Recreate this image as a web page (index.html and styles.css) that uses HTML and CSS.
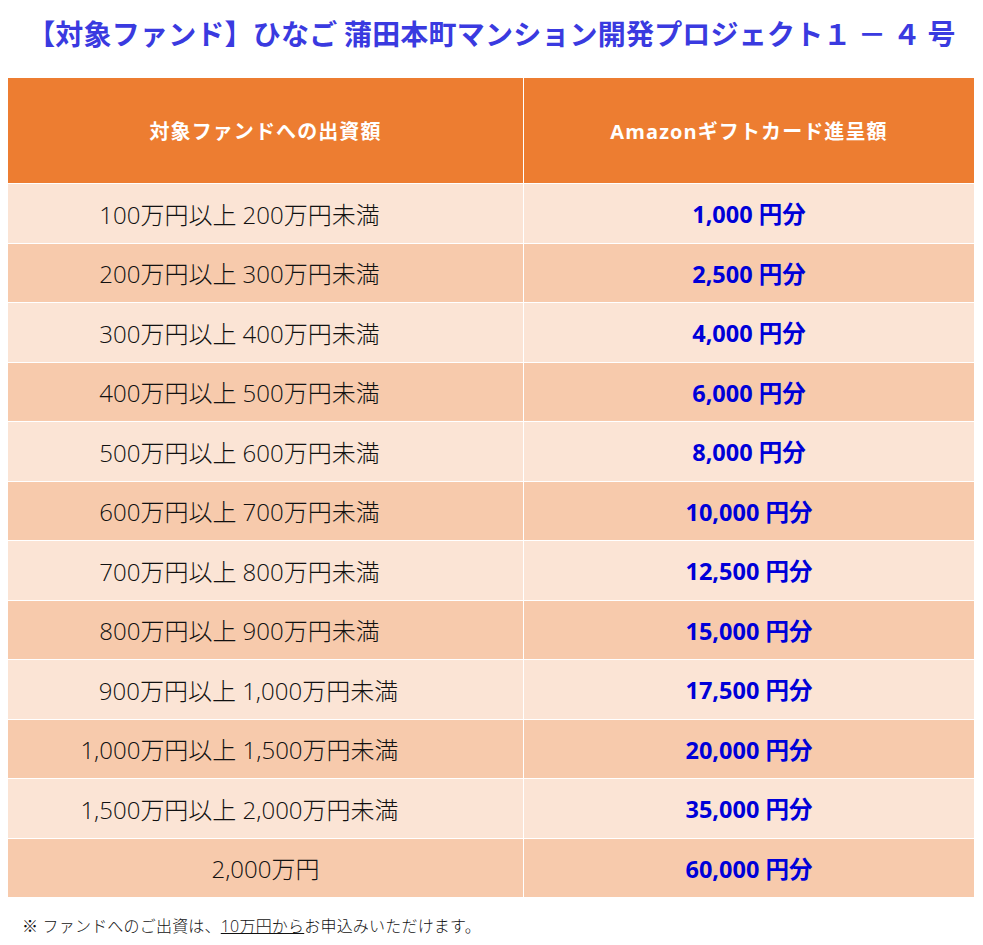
FILE: index.html
```html
<!DOCTYPE html>
<html lang="ja">
<head>
<meta charset="utf-8">
<title>対象ファンド</title>
<link rel="stylesheet" href="styles.css">
</head>
<body>
<div class="page">
  <h1 class="title">【対象ファンド】ひなご 蒲田本町マンション開発プロジェクト１ － ４ 号</h1>
  <table class="gift">
    <thead>
      <tr><th>対象ファンドへの出資額</th><th>Amazonギフトカード進呈額</th></tr>
    </thead>
    <tbody>
      <tr><td class="range">100万円以上 200万円未満</td><td class="amt">1,000 円分</td></tr>
      <tr><td class="range">200万円以上 300万円未満</td><td class="amt">2,500 円分</td></tr>
      <tr><td class="range">300万円以上 400万円未満</td><td class="amt">4,000 円分</td></tr>
      <tr><td class="range">400万円以上 500万円未満</td><td class="amt">6,000 円分</td></tr>
      <tr><td class="range">500万円以上 600万円未満</td><td class="amt">8,000 円分</td></tr>
      <tr><td class="range">600万円以上 700万円未満</td><td class="amt">10,000 円分</td></tr>
      <tr><td class="range">700万円以上 800万円未満</td><td class="amt">12,500 円分</td></tr>
      <tr><td class="range">800万円以上 900万円未満</td><td class="amt">15,000 円分</td></tr>
      <tr><td class="range range-mid">900万円以上 1,000万円未満</td><td class="amt">17,500 円分</td></tr>
      <tr><td class="range">1,000万円以上 1,500万円未満</td><td class="amt">20,000 円分</td></tr>
      <tr><td class="range">1,500万円以上 2,000万円未満</td><td class="amt">35,000 円分</td></tr>
      <tr><td>2,000万円</td><td class="amt">60,000 円分</td></tr>
    </tbody>
  </table>
  <p class="note">※ ファンドへのご出資は、<span class="ul">10万円から</span>お申込みいただけます。</p>
</div>
</body>
</html>
```
FILE: styles.css
```css
html, body {
  margin: 0;
  padding: 0;
  background: #ffffff;
}
body {
  font-family: "Open Sans", "Noto Sans CJK JP", sans-serif;
  color: #111111;
}
.page {
  padding: 0 8px;
}
.title {
  margin: 0;
  padding: 13px 0 0;
  height: 64px;
  box-sizing: border-box;
  text-align: center;
  font-family: "Noto Sans CJK JP", sans-serif;
  font-size: 28px;
  font-weight: 700;
  color: #3a3ae0;
  line-height: 40px;
  letter-spacing: 0.2px;
  white-space: nowrap;
}
.gift {
  width: 966px;
  border-collapse: collapse;
  table-layout: fixed;
  margin-top: 14px;
}
.gift th, .gift td {
  border: 1px solid #ffffff;
  text-align: center;
  padding: 0;
}
.gift tr > :first-child { border-left: none; }
.gift tr > :last-child { border-right: none; }
.gift thead tr > * { border-top: none; }
.gift th {
  width: 50%;
  height: 105px;
  background: #ed7d31;
  color: #ffffff;
  font-size: 20px;
  font-weight: 700;
  letter-spacing: 1.1px;
}
.gift th:first-child { width: 515px; }
.gift td {
  height: 58.5px;
  font-size: 24px;
  font-weight: 300;
  color: #111111;
}
.gift td.range { padding-right: 52px; }
.gift td.range-mid { padding-right: 34px; }
.gift tbody tr:nth-child(odd) td { background: #fbe4d5; }
.gift tbody tr:nth-child(even) td { background: #f7caac; }
.gift td.amt {
  color: #0000d8;
  font-weight: 700;
  font-size: 23.5px;
}
.note {
  margin: 15px 0 0 14px;
  font-size: 16px;
  font-weight: 300;
  color: #111111;
  letter-spacing: 0.2px;
}
.ul {
  text-decoration: underline;
}
```
